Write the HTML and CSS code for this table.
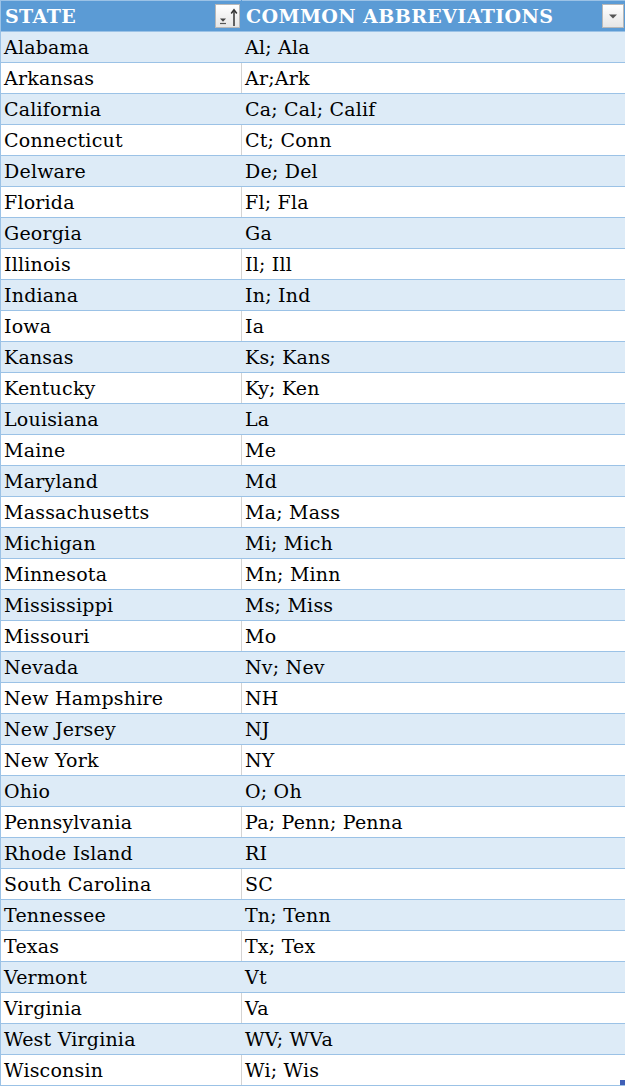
FILE: index.html
```html
<!DOCTYPE html>
<html>
<head>
<meta charset="utf-8">
<link rel="stylesheet" href="styles.css">
</head>
<body>
<table class="sheet">
  <colgroup><col class="c1"><col class="c2"></colgroup>
  <thead>
    <tr>
      <th><div class="hcell"><span>STATE</span>
        <span class="fbtn"><svg width="24" height="24" viewBox="0 0 24 24"><path d="M4 14.5h6l-3 3.2z" fill="#444"/><path d="M4 19.5h6" stroke="#555" stroke-width="1.2"/><path d="M18 22V6" stroke="#333" stroke-width="1.5"/><path d="M15.2 9.5L18 5.8l2.8 3.7" fill="none" stroke="#333" stroke-width="1.5"/></svg></span></div></th>
      <th><div class="hcell"><span>COMMON ABBREVIATIONS</span>
        <span class="fbtn small"><svg width="22" height="24" viewBox="0 0 22 24"><path d="M7 10.5h8l-4 4z" fill="#555"/></svg></span></div></th>
    </tr>
  </thead>
  <tbody>
    <tr><td>Alabama</td><td>Al; Ala</td></tr>
    <tr><td>Arkansas</td><td>Ar;Ark</td></tr>
    <tr><td>California</td><td>Ca; Cal; Calif</td></tr>
    <tr><td>Connecticut</td><td>Ct; Conn</td></tr>
    <tr><td>Delware</td><td>De; Del</td></tr>
    <tr><td>Florida</td><td>Fl; Fla</td></tr>
    <tr><td>Georgia</td><td>Ga</td></tr>
    <tr><td>Illinois</td><td>Il; Ill</td></tr>
    <tr><td>Indiana</td><td>In; Ind</td></tr>
    <tr><td>Iowa</td><td>Ia</td></tr>
    <tr><td>Kansas</td><td>Ks; Kans</td></tr>
    <tr><td>Kentucky</td><td>Ky; Ken</td></tr>
    <tr><td>Louisiana</td><td>La</td></tr>
    <tr><td>Maine</td><td>Me</td></tr>
    <tr><td>Maryland</td><td>Md</td></tr>
    <tr><td>Massachusetts</td><td>Ma; Mass</td></tr>
    <tr><td>Michigan</td><td>Mi; Mich</td></tr>
    <tr><td>Minnesota</td><td>Mn; Minn</td></tr>
    <tr><td>Mississippi</td><td>Ms; Miss</td></tr>
    <tr><td>Missouri</td><td>Mo</td></tr>
    <tr><td>Nevada</td><td>Nv; Nev</td></tr>
    <tr><td>New Hampshire</td><td>NH</td></tr>
    <tr><td>New Jersey</td><td>NJ</td></tr>
    <tr><td>New York</td><td>NY</td></tr>
    <tr><td>Ohio</td><td>O; Oh</td></tr>
    <tr><td>Pennsylvania</td><td>Pa; Penn; Penna</td></tr>
    <tr><td>Rhode Island</td><td>RI</td></tr>
    <tr><td>South Carolina</td><td>SC</td></tr>
    <tr><td>Tennessee</td><td>Tn; Tenn</td></tr>
    <tr><td>Texas</td><td>Tx; Tex</td></tr>
    <tr><td>Vermont</td><td>Vt</td></tr>
    <tr><td>Virginia</td><td>Va</td></tr>
    <tr><td>West Virginia</td><td>WV; WVa</td></tr>
    <tr><td>Wisconsin</td><td class="last">Wi; Wis<span class="handle"></span></td></tr>
  </tbody>
</table>
</body>
</html>
```
FILE: styles.css
```css
html, body {
  margin: 0;
  padding: 0;
  background: #ffffff;
}
.sheet {
  border-collapse: collapse;
  width: 625px;
  table-layout: fixed;
  font-family: "DejaVu Serif", "Liberation Serif", serif;
  font-size: 19px;
  letter-spacing: 0.2px;
  color: #000;
}
.c1 { width: 241px; }
.c2 { width: 384px; }
.sheet th {
  background: #5b9bd5;
  color: #fff;
  font-weight: bold;
  letter-spacing: 0.4px;
  text-align: left;
  height: 31px;
  padding: 0 0 0 4px;
  border: 1px solid #9bc2e6;
  box-sizing: border-box;
}
.sheet th:first-child { border-right: 1px solid #5b9bd5; }
.hcell {
  display: flex;
  align-items: center;
  justify-content: space-between;
  padding-right: 1px;
}
.fbtn {
  display: flex;
  flex: none;
  width: 25px;
  height: 24px;
  box-sizing: border-box;
  border: 1px solid #b8b8b8;
  background: linear-gradient(#ffffff, #e6e6e6);
  align-items: center;
  justify-content: center;
  overflow: hidden;
}
.fbtn svg { flex: none; }
.fbtn.small { width: 22px; }
.sheet td {
  height: 30px;
  padding: 0 0 0 3px;
  border-bottom: 1px solid #9bc2e6;
  border-left: 1px solid #d4d4d4;
  white-space: nowrap;
  line-height: 30px;
  vertical-align: middle;
}
.sheet td:first-child { border-left: 1px solid #9bc2e6; }
.sheet td:last-child { border-right: 1px solid #9bc2e6; }
.sheet tbody tr:nth-child(odd) td { background: #ddebf7; }
.sheet tbody tr:nth-child(odd) td + td { border-left-color: #ddebf7; }
.last { position: relative; }
.handle {
  position: absolute;
  right: 0;
  bottom: 0;
  width: 5px;
  height: 5px;
  background: #3f5fb6;
}
```
